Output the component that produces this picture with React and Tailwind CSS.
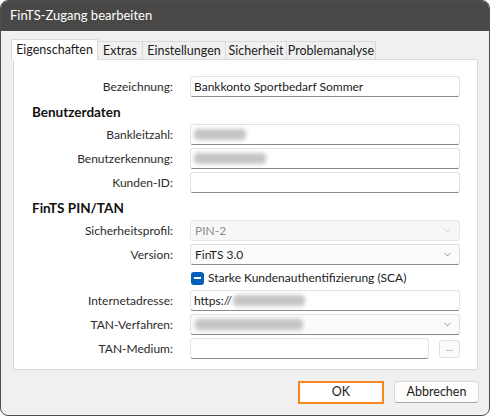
import { ChevronDown } from 'lucide-react';

const FONT = { fontFamily: 'Lato, "Segoe UI", "Noto Sans", sans-serif' };

function Blur({ w }) {
  return <span className={`inline-block h-[11px] rounded-sm bg-[#c4c4c4] blur-[2px] ${w}`} />;
}

function TextBox({ children, className = '' }) {
  return (
    <div className={`h-[21px] flex items-center px-[3px] bg-white border border-[#e3e3e3] border-b-[#8a8a8a] rounded-[3px] text-[12px] text-[#1b1b1b] ${className}`}>
      {children}
    </div>
  );
}

function Select({ children, disabled }) {
  return (
    <div className={`h-[21px] flex items-center justify-between pl-[4px] pr-[6px] border rounded-[3px] text-[12px] ${disabled ? 'bg-[#f7f7f7] border-[#e6e6e6] text-[#8f8f8f]' : 'bg-[#fbfbfb] border-[#e0e0e0] border-b-[#8a8a8a] text-[#1b1b1b]'}`}>
      <div className="flex items-center">{children}</div>
      <ChevronDown size={11} strokeWidth={1.3} className={disabled ? 'text-[#b5b5b5]' : 'text-[#555]'} />
    </div>
  );
}

function Row({ label, children, className = '' }) {
  return (
    <div className={`flex items-center ${className}`}>
      <div className="w-[141px] text-right text-[12px] text-[#2b2b2b]">{label}</div>
      <div className="flex-1 ml-[17px]">{children}</div>
    </div>
  );
}

const TABS = [
  ['Eigenschaften', 'w-[87px]'],
  ['Extras', 'w-[46px]'],
  ['Einstellungen', 'w-[84px]'],
  ['Sicherheit', 'w-[62px]'],
  ['Problemanalyse', 'w-[90px]'],
];

export default function App() {
  return (
    <div className="w-[490px] h-[416px] bg-white" style={FONT}>
      <div className="h-full flex flex-col rounded-[8px] overflow-hidden border border-[#4f4d4b] bg-[#f0f0f0]">
        <div className="h-[30px] shrink-0 bg-[#4a4846] text-white text-[13px] flex items-center pl-[9px]">
          FinTS-Zugang bearbeiten
        </div>

        <div className="flex-1 flex flex-col px-[10px] pt-[8px]">
          <div className="flex items-end h-[21px]">
            {TABS.map(([t, w], i) => (
              <div
                key={t}
                className={`${w} text-[12.5px] text-[#1b1b1b] flex items-center justify-center border border-b-0 ${i === 0 ? 'h-[21px] bg-white border-[#d9d9d9] relative z-10' : 'h-[19px] bg-[#f0f0f0] border-[#dadada] -ml-px'}`}
              >
                {t}
              </div>
            ))}
          </div>

          <div className="ml-[2px] mr-[1px] h-[311px] bg-white border border-[#dadada] -mt-px pl-[18px] pr-[17px] pt-[16px]">
            <Row label="Bezeichnung:">
              <TextBox>Bankkonto Sportbedarf Sommer</TextBox>
            </Row>

            <div className="mt-[4px] h-[23px] flex items-center text-[13.5px] font-bold text-[#111]">Benutzerdaten</div>

            <Row label="Bankleitzahl:">
              <TextBox><Blur w="w-[52px]" /></TextBox>
            </Row>
            <Row label="Benutzerkennung:" className="mt-[3px]">
              <TextBox><Blur w="w-[72px]" /></TextBox>
            </Row>
            <Row label="Kunden-ID:" className="mt-[3px]">
              <TextBox />
            </Row>

            <div className="mt-[3px] h-[24px] flex items-center text-[13.5px] font-bold text-[#111]">FinTS PIN/TAN</div>

            <Row label="Sicherheitsprofil:">
              <Select disabled>PIN-2</Select>
            </Row>
            <Row label="Version:" className="mt-[3px]">
              <Select>FinTS 3.0</Select>
            </Row>

            <div className="flex items-center h-[22px] mt-[2px]">
              <div className="w-[158px]" />
              <div className="ml-[1px] w-[13px] h-[13px] rounded-[3px] bg-[#005fb8] flex items-center justify-center">
                <div className="w-[7px] h-[1.5px] bg-white" />
              </div>
              <span className="ml-[4px] text-[12px] text-[#1b1b1b]">Starke Kundenauthentifizierung (SCA)</span>
            </div>

            <Row label="Internetadresse:" className="mt-[1px]">
              <TextBox>https://<Blur w="w-[72px] ml-[1px]" /></TextBox>
            </Row>
            <Row label="TAN-Verfahren:" className="mt-[3px]">
              <Select><Blur w="w-[108px]" /></Select>
            </Row>
            <Row label="TAN-Medium:" className="mt-[3px]">
              <div className="flex items-center">
                <TextBox className="flex-1" />
                <div className="ml-[10px] w-[21px] h-[18px] border border-[#e0e0e0] rounded-[3px] bg-[#fbfbfb] text-[10px] text-[#9a9a9a] flex items-center justify-center leading-none pb-[3px]">
                  ...
                </div>
              </div>
            </Row>
          </div>

          <div className="flex justify-end mt-[11px] pr-[0px]">
            <button className="w-[86px] h-[23px] bg-white border-2 border-[#f5891f] text-[12.5px] text-[#1b1b1b]">OK</button>
            <button className="ml-[10px] w-[85px] h-[22px] bg-[#fdfdfd] border border-[#d6d6d6] border-b-[#a8a8a8] rounded-[4px] text-[12.5px] text-[#1b1b1b]">Abbrechen</button>
          </div>
        </div>
      </div>
    </div>
  );
}
